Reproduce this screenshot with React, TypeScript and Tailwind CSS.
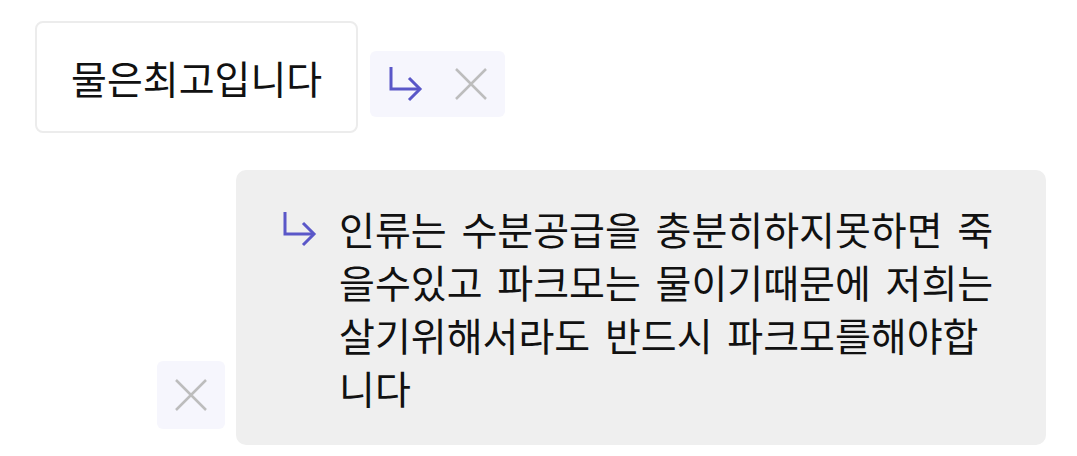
import React from 'react';

function ReplyArrow({ className = '' }: { className?: string }) {
  return (
    <svg width="35" height="38" viewBox="0 0 35 38" fill="none" className={className}>
      <path d="M3 2V24H32" stroke="currentColor" strokeWidth="3" />
      <path d="M21 13L32 24L21 35" stroke="currentColor" strokeWidth="3" />
    </svg>
  );
}

function CloseIcon() {
  return (
    <svg width="32" height="32" viewBox="0 0 32 32" fill="none" className="text-[#bdbdbd]">
      <path d="M1 1L31 31M31 1L1 31" stroke="currentColor" strokeWidth="2.5" />
    </svg>
  );
}

export default function App() {
  return (
    <div
      className="w-[1077px] h-[456px] bg-white text-[#111] overflow-hidden"
      style={{ fontFamily: '"Noto Sans CJK KR", "Noto Sans", sans-serif' }}
    >
      <div className="flex items-start gap-3 pt-[21px] pl-[35px]">
        <div className="w-[323px] h-[112px] border-2 border-[#ececec] rounded-lg flex items-center pl-[34px] text-[39px]">
          물은최고입니다
        </div>
        <div className="mt-[30px] h-[66px] flex items-center gap-[32px] pl-[18px] pr-[18px] bg-[#f6f6fd] rounded-md">
          <ReplyArrow className="text-[#5a57c8]" />
          <CloseIcon />
        </div>
      </div>

      <div className="flex justify-end items-end gap-[11px] pr-[31px] mt-[37px]">
        <div className="w-[68px] h-[68px] flex items-center justify-center bg-[#f6f6fd] rounded-md mb-[16px]">
          <CloseIcon />
        </div>
        <div className="w-[810px] h-[275px] bg-[#efefef] rounded-[10px] flex items-start gap-[22px] pl-[46px] pt-[40px]">
          <ReplyArrow className="text-[#5a57c8] shrink-0" />
          <p className="w-[662px] -mt-[36px] pt-[28px] text-[39px] leading-[53px] break-all [word-spacing:6px]">
            인류는 수분공급을 충분히하지못하면 죽을수있고 파크모는 물이기때문에 저희는 살기위해서라도 반드시 파크모를해야합니다
          </p>
        </div>
      </div>
    </div>
  );
}
